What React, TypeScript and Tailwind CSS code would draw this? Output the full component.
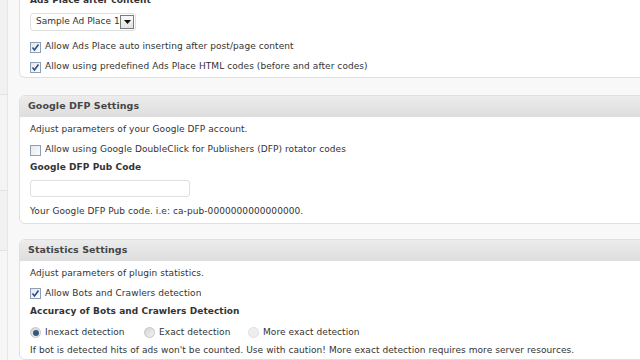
import React from 'react';

const Checkbox: React.FC<{ checked?: boolean }> = ({ checked }) => (
  <span className="flex h-[11px] w-[11px] shrink-0 items-center justify-center border border-[#8e9fb3] bg-linear-to-br from-[#e4e8ee] to-[#fbfcfd]">
    {checked && (
      <svg width="9" height="9" viewBox="0 0 9 9">
        <path d="M1.5 4.5 L3.5 7 L7.5 1.5" fill="none" stroke="#2d4f86" strokeWidth="1.6" />
      </svg>
    )}
  </span>
);

const Radio: React.FC<{ checked?: boolean; faded?: boolean }> = ({ checked, faded }) => (
  <span
    className={`flex h-[11px] w-[11px] shrink-0 items-center justify-center rounded-full border ${
      faded ? 'border-[#e0e0e0] bg-[#eeeeee]' : 'border-[#c5c5c5] bg-linear-to-br from-[#d4d4d4] to-[#f4f4f4]'
    }`}
  >
    {checked && <span className="h-[6px] w-[6px] rounded-full bg-[#35587a]" />}
  </span>
);

const Row: React.FC<{ children: React.ReactNode; className?: string }> = ({ children, className = 'h-[20px]' }) => (
  <div className={`flex items-center gap-[4px] ${className}`}>{children}</div>
);

const Panel: React.FC<{ title: string; children: React.ReactNode }> = ({ title, children }) => (
  <div className="overflow-hidden rounded-[6px] border border-[#dfdfdf] bg-white">
    <div className="flex h-[21px] items-center border-b border-[#dfdfdf] bg-linear-to-b from-[#ececec] to-[#dedede] pl-[8px] pt-[1px] text-[9.5px] font-bold tracking-[0.05px] text-[#464646]">
      {title}
    </div>
    <div className="pl-[10px] pt-[3px]">{children}</div>
  </div>
);

export default function App() {
  return (
    <div className="flex h-[360px] overflow-hidden bg-[#f8f8f8] font-['DejaVu_Sans',sans-serif] text-[9px] tracking-[0.07px] text-[#333]">
      {/* admin menu edge */}
      <div className="flex w-[8px] shrink-0 flex-col border-r border-[#e6e6e6]">
        <div className="h-[95px] border-b border-[#e2e2e2] bg-[#f1f1f1]" />
        <div className="h-[96px] border-b border-[#e2e2e2] bg-[#f4f4f4]" />
        <div className="h-[60px] border-b border-[#e2e2e2] bg-[#f1f1f1]" />
        <div className="flex-1 bg-[#f6f6f6]" />
      </div>

      <div className="-mr-[30px] flex flex-1 flex-col pl-[11px]">
        {/* Ads Place panel (scrolled) */}
        <div className="-mt-[8px] rounded-b-[6px] border border-t-0 border-[#dfdfdf] bg-white pl-[10px]">
          <div className="flex h-[17px] items-center font-bold text-[#333]">Ads Place after content</div>
          <div className="mt-[4px] flex h-[18px] w-[106px] items-center justify-between whitespace-nowrap rounded-[3px] border border-[#dfdfdf] bg-white pl-[5px] pr-[1px] tracking-normal">
            <span>Sample Ad Place 1</span>
            <span className="flex h-[14px] w-[14px] shrink-0 items-center justify-center border border-[#7a7a7a] bg-linear-to-b from-[#fafafa] to-[#e2e2e2]">
              <svg width="7" height="4" viewBox="0 0 7 4">
                <path d="M0 0 H7 L3.5 4 Z" fill="#111" />
              </svg>
            </span>
          </div>
          <div className="h-[6px]" />
          <Row>
            <Checkbox checked />
            <span>Allow Ads Place auto inserting after post/page content</span>
          </Row>
          <Row>
            <Checkbox checked />
            <span>Allow using predefined Ads Place HTML codes (before and after codes)</span>
          </Row>
        </div>

        <div className="mt-[17px]">
          <Panel title="Google DFP Settings">
            <Row>Adjust parameters of your Google DFP account.</Row>
            <Row>
              <Checkbox />
              <span>Allow using Google DoubleClick for Publishers (DFP) rotator codes</span>
            </Row>
            <Row className="h-[16px] font-bold">Google DFP Pub Code</Row>
            <div className="mt-[4px] h-[17px] w-[160px] rounded-[3px] border border-[#dfdfdf] bg-white" />
            <Row className="h-[26px] pt-[3px]">Your Google DFP Pub code. i.e: ca-pub-0000000000000000.</Row>
          </Panel>
        </div>

        <div className="mt-[15px]">
          <Panel title="Statistics Settings">
            <Row>Adjust parameters of plugin statistics.</Row>
            <Row className="h-[19px]">
              <Checkbox checked />
              <span>Allow Bots and Crawlers detection</span>
            </Row>
            <Row className="h-[17px] font-bold">Accuracy of Bots and Crawlers Detection</Row>
            <div className="flex h-[22px] items-center pt-[3px]">
              <label className="flex w-[114px] items-center gap-[4px]">
                <Radio checked />
                <span>Inexact detection</span>
              </label>
              <label className="flex w-[104px] items-center gap-[4px]">
                <Radio />
                <span>Exact detection</span>
              </label>
              <label className="flex items-center gap-[4px]">
                <Radio faded />
                <span>More exact detection</span>
              </label>
            </div>
            <Row className="h-[17px]">
              If bot is detected hits of ads won't be counted. Use with caution! More exact detection requires more server resources.
            </Row>
          </Panel>
        </div>
      </div>
    </div>
  );
}
